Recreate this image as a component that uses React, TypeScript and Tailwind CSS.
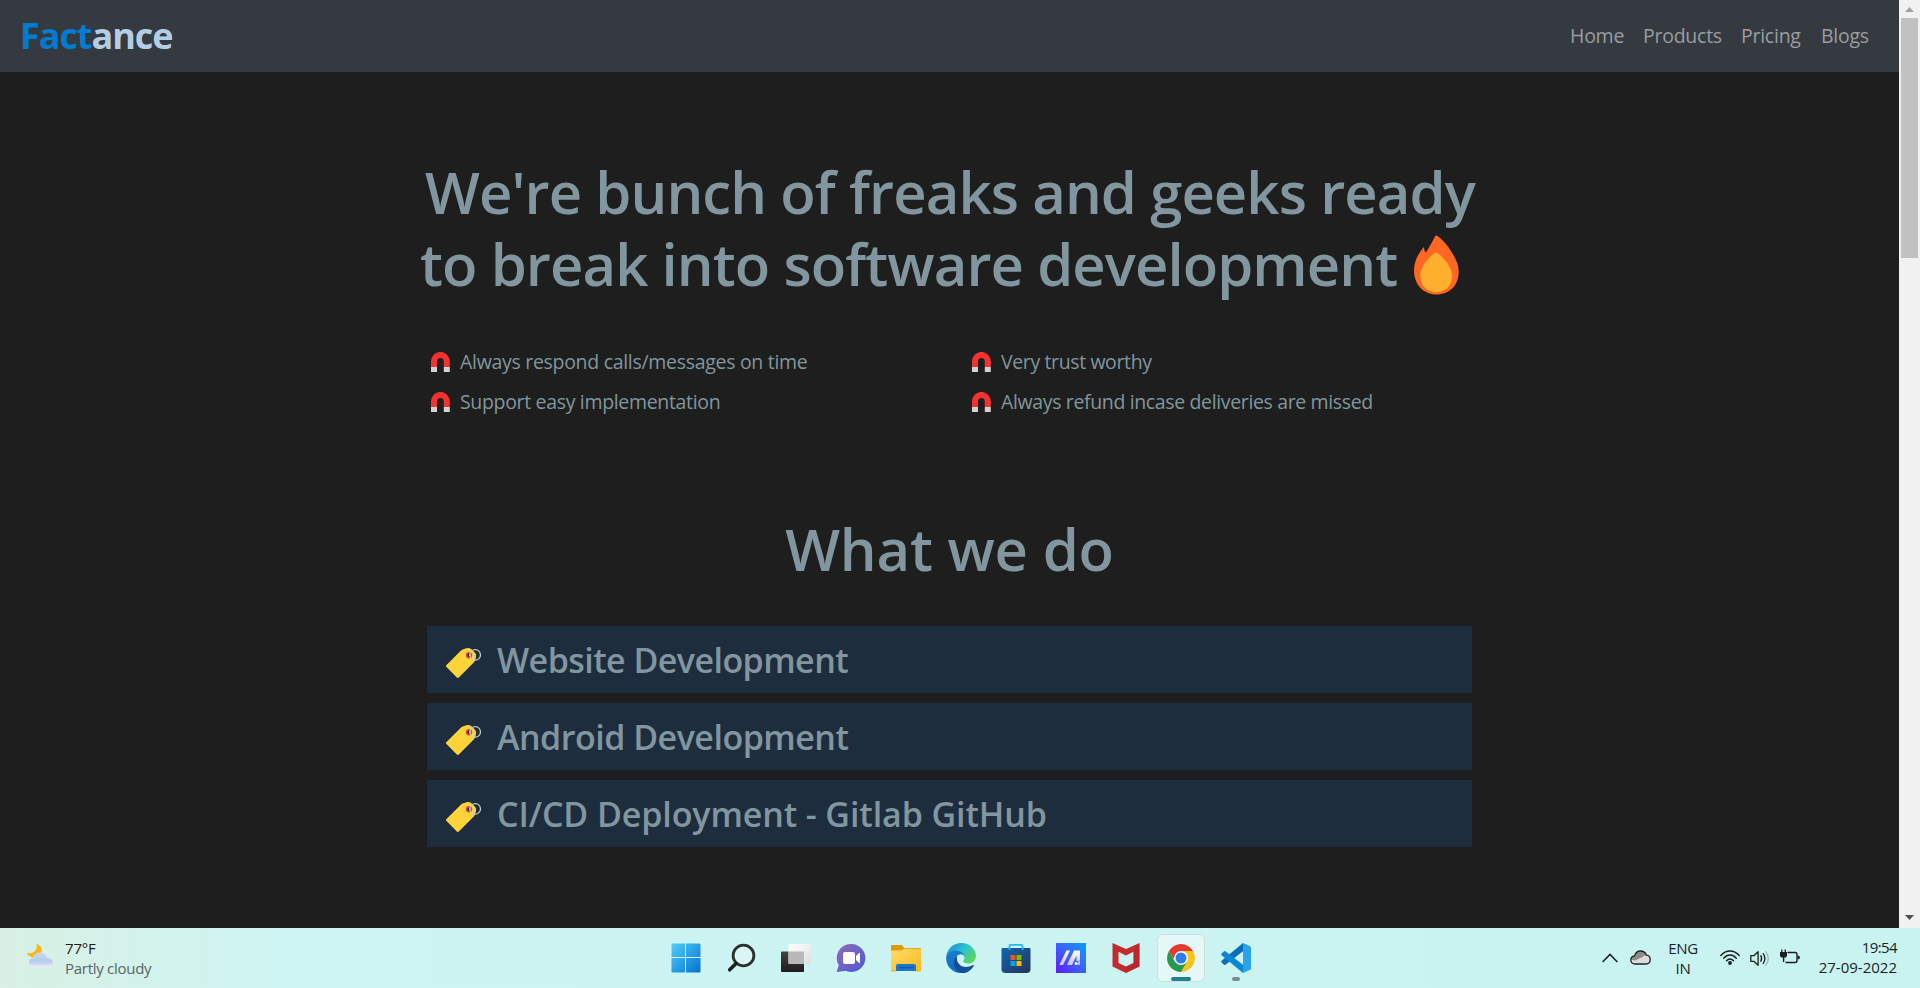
import React from 'react';

const Fire = () => (
  <svg className="ml-[17px] mt-[7px] h-[60px] w-[45px] shrink-0" viewBox="0 0 45 60">
    <path fill="#ff6723" d="M22.5.2C27 3 31 7.500 35 13c5 7.500 9.700 15 9.700 23.500C44.700 51 35 59.500 22.500 59.500S0 50 0 35.500C0 26 4.500 18.500 9.600 11.900c.8 1.800.6 4 2.400 5.700C14.500 13 18.500 7 20.500 2.500c.5-1.200 1.200-2.300 2-2.300Z" />
    <path fill="#ffb02e" d="M20 18.400c1.500-1.200 2.800-1.200 4.200 0C31 24.500 38 32 38 41.500 38 51 31 57.200 22.200 57.200S6.300 51 6.300 41C6.300 32 13 24.500 20 18.400Z" />
  </svg>
);

const Magnet = () => (
  <svg className="mr-[10px] h-5 w-[19px] shrink-0" viewBox="0 0 19 20">
    <path fill="#f8312f" d="M0 15V9.500a9.300 9.500 0 0 1 18.800 0V15h-6V9.500a3.400 3.500 0 0 0-6.800 0V15Z" />
    <path fill="#d3d3d3" d="M0 15h6v5H0zM12.800 15h6v5h-6z" />
  </svg>
);

const Tag = () => (
  <svg className="mt-[7px] h-[31px] w-9 shrink-0" viewBox="0 0 36 31">
    <path fill="#ffd43b" fillRule="evenodd" d="M.5 17 14.800 2.700C16 1.600 20 .3 22.500.1c1.200 0 2.500.7 4 2.200l2.200 2.200c1.300 1.300 1.500 2.700 1.300 4-.2 2-.8 4.200-2 5.700L13 29.300c-.8.8-1.600.8-2.400 0L.5 19c-.7-.7-.7-1.300 0-2ZM23 5a2.300 2.300 0 1 0 0 4.600A2.300 2.300 0 0 0 23 5Z" />
    <circle cx="23" cy="7.300" r="2.500" fill="none" stroke="#f0433a" strokeWidth="1.500" />
    <circle cx="29.200" cy="6.900" r="5.300" fill="none" stroke="#c4c7ca" strokeWidth="1.300" />
    <path d="M23.900 6.500v1.600" stroke="#e6e6e6" strokeWidth="1.200" />
  </svg>
);

const Slot = ({ children }: { children: React.ReactNode }) => (
  <div className="flex h-[60px] w-[55px] items-center justify-center">{children}</div>
);

const StartIcon = () => (
  <svg className="h-[30px] w-[30px]" viewBox="0 0 30 30">
    <defs>
      <linearGradient id="win" x1="0" y1="0" x2="1" y2="1" gradientUnits="objectBoundingBox">
        <stop offset="0" stopColor="#4fd0fb" />
        <stop offset="1" stopColor="#0470cf" />
      </linearGradient>
    </defs>
    <path fill="url(#win)" d="M1.500.5H14V14H.5V1.500Q.5.5 1.500.5ZM15 .5h13.500q1 0 1 1V14H15ZM.5 15H14v14.500H1.500q-1 0-1-1ZM15 15h14.500v13.500q0 1-1 1H15Z" />
  </svg>
);

const SearchGlyph = () => (
  <svg className="h-[30px] w-[30px]" viewBox="0 0 30 30">
    <circle cx="17.500" cy="12.500" r="10.400" fill="#dff5f3" fillOpacity=".7" stroke="#2f2f2f" strokeWidth="2.800" />
    <path d="m10 20.500-6.300 6.300" stroke="#1f1f1f" strokeWidth="3.600" strokeLinecap="round" />
  </svg>
);

const TaskView = () => (
  <svg className="h-[30px] w-[30px]" viewBox="0 0 30 30">
    <defs>
      <linearGradient id="tvd" x1="0" y1="0" x2="0" y2="1">
        <stop offset="0" stopColor="#424242" />
        <stop offset="1" stopColor="#1d1d1d" />
      </linearGradient>
      <linearGradient id="tvl" x1="0" y1="0" x2="1" y2="1">
        <stop offset="0" stopColor="#ffffff" />
        <stop offset="1" stopColor="#dcdedd" />
      </linearGradient>
    </defs>
    <rect x="0" y="8.500" width="23" height="20.500" rx="1" fill="url(#tvd)" />
    <rect x="7.500" y="1" width="22.500" height="20" rx="1" fill="url(#tvl)" />
    <path d="M7.500 8.500H22q1 0 1 1V21H8.500q-1 0-1-1Z" fill="#b9b9b9" />
  </svg>
);

const Chat = () => (
  <svg className="h-[30px] w-[30px]" viewBox="0 0 30 30">
    <defs>
      <linearGradient id="chat" x1="0" y1="0" x2="1" y2="1">
        <stop offset="0" stopColor="#9c67ad" />
        <stop offset=".45" stopColor="#6d64cc" />
        <stop offset="1" stopColor="#5157c4" />
      </linearGradient>
    </defs>
    <path fill="url(#chat)" d="M15.500 1a14 14 0 1 1-5.800 26.800L1.500 29c-.7 0-.9-.5-.6-1.100l1.900-5.700A14 14 0 0 1 15.500 1Z" />
    <rect x="7" y="9" width="12" height="12" rx="2" fill="#fff" />
    <path fill="#fff" d="m20 13 3-3q1-.7 1 .5v9q0 1.200-1 .5l-3-3Z" />
  </svg>
);

const Explorer = () => (
  <svg className="h-[30px] w-[30px]" viewBox="0 0 30 30">
    <defs>
      <linearGradient id="fold" x1="0" y1="0" x2="1" y2="1">
        <stop offset="0" stopColor="#ffda6b" />
        <stop offset="1" stopColor="#fdba1c" />
      </linearGradient>
    </defs>
    <path fill="#dc9a04" d="M0 3q0-1 1-1h9q1 0 1.700.8L13 5h16q1 0 1 1v6H0Z" />
    <path fill="url(#fold)" d="M0 7.500h10.500L13 5.700h16q1 0 1 1V28H1q-1 0-1-1Z" />
    <path fill="#1976cc" d="M5 28v-5q0-2 2-2h16q2 0 2 2v5Z" />
    <path fill="#0b5aa6" d="M8 24h14v1.300H8z" />
    <path fill="#f3b518" d="M0 27h5v1.500H1q-1 0-1-1.500ZM25 27h5q0 1.500-1 1.500h-4Z" />
  </svg>
);

const EdgeIcon = () => (
  <svg className="h-[30px] w-[30px]" viewBox="0 0 30 30">
    <defs>
      <linearGradient id="edgeTop" x1="0" y1="0.200" x2="1" y2="0.800">
        <stop offset="0" stopColor="#1690d8" />
        <stop offset=".5" stopColor="#2ec3cf" />
        <stop offset="1" stopColor="#61d946" />
      </linearGradient>
      <linearGradient id="edgeLeft" x1="0" y1="0" x2="0" y2="1">
        <stop offset="0" stopColor="#1a7ccb" />
        <stop offset="1" stopColor="#0f6cc6" />
      </linearGradient>
    </defs>
    <path fill="url(#edgeTop)" d="M.3 12.500C1.800 5 8 0 15.200 0 24 0 30 6.300 30 13c0 4.500-3.500 7.500-7.500 7.500-3.300 0-5.300-1.200-5.300-2.300 0-.8 1.300-1.500 1.300-3.500 0-3.500-3.500-5.700-8-5.700-4.500 0-8 1.500-10.200 3.500Z" />
    <path fill="url(#edgeLeft)" d="M.2 13.500C1.700 9.500 5.500 7.500 9.700 7.500c5 0 9.100 3 9 7-.5-2-2-3.200-4-3.200-3.500 0-5.200 3.700-5.200 7C9.500 24 13 28.500 18 29.700c-1 .3-2 .3-3 .3C6.500 30-.6 23 .2 13.500Z" />
    <path fill="#134e98" d="M11.200 13.300c-1.500 5 2.300 10.700 8.600 10.700 2.700 0 5-.7 7.200-1.900.6-.3 1.100.2.7.8C25.500 27 20.500 31 15.500 29.700 9.500 28.500 6.800 22 8.200 17.500c.6-1.900 1.600-3.300 3-4.200Z" />
  </svg>
);

const Store = () => (
  <svg className="h-[30px] w-[30px]" viewBox="0 0 30 30">
    <defs>
      <linearGradient id="store" x1="0" y1="0" x2="1" y2="1">
        <stop offset="0" stopColor="#0d66b5" />
        <stop offset="1" stopColor="#2a3356" />
      </linearGradient>
    </defs>
    <path fill="url(#store)" d="M.5 6q0-1 1-1h27q1 0 1 1v20q0 4-4 4h-21q-4 0-4-4Z" />
    <path fill="none" stroke="#24b9ee" strokeWidth="1.800" d="M8.500 7V2.800q0-1 1-1h11q1 0 1 1V7" />
    <path fill="#f25022" d="M9.500 12h5v5h-5z" />
    <path fill="#7fba00" d="M15.500 12h5v5h-5z" />
    <path fill="#00a4ef" d="M9.500 18h5v5h-5z" />
    <path fill="#ffb900" d="M15.500 18h5v5h-5z" />
  </svg>
);

const MyAsus = () => (
  <svg className="h-[30px] w-[30px]" viewBox="0 0 30 30">
    <defs>
      <linearGradient id="asus" x1="1" y1="0" x2="0" y2="1">
        <stop offset="0" stopColor="#0a9dff" />
        <stop offset=".5" stopColor="#3b62fb" />
        <stop offset="1" stopColor="#6418fb" />
      </linearGradient>
      <linearGradient id="asusw" x1="0" y1="0" x2="0" y2="1">
        <stop offset="0" stopColor="#fff" />
        <stop offset="1" stopColor="#c9c2ff" />
      </linearGradient>
    </defs>
    <path fill="url(#asus)" d="M0 0h30v30H0z" />
    <path fill="url(#asusw)" d="M10.500 7.500H14L7 22H3.300ZM18 7.500h3.200L14.500 22H11ZM20.300 7.500H24V18h-3.500v-5.500L16 22h-2.500Z" />
    <circle cx="20.200" cy="20.500" r="1.600" fill="#fff" />
    <path fill="#b9b8ff" d="M22 17h2v5h-2z" />
  </svg>
);

const Mcafee = () => (
  <svg className="h-[30px] w-[30px]" viewBox="0 0 30 30">
    <path fill="#c22c2f" fillRule="evenodd" d="M1.500 0 15 6 28.500 0v23.500L15 30 1.500 23.500ZM7.500 8.800v11.200l7.500 3.600 7.500-3.600V8.800L15 12.500Z" />
    <path fill="#a92327" d="m22.500 8.800 6-8.800v23.500L15 30v-6.400l7.500-3.600Z" fillOpacity=".35" />
  </svg>
);

const ChromeIcon = () => (
  <svg className="h-7 w-7" viewBox="0 0 28 28">
    <path fill="#e33b2e" d="M14 14 1.900 7A14 14 0 0 1 26.100 7Z" />
    <path fill="#fcc31e" d="M14 14V7h12.100A14 14 0 0 1 14 28l6-10.500Z" />
    <path fill="#249a4a" d="M14 14 20.100 17.500 14 28A14 14 0 0 1 1.900 7L8 17.500Z" />
    <path fill="#e33b2e" d="M1.900 7 14 7v7H6Z" />
    <circle cx="14" cy="14" r="6.900" fill="#fff" />
    <circle cx="14" cy="14" r="5.500" fill="#2f7cf0" />
  </svg>
);

const VsCode = () => (
  <svg className="h-[30px] w-[30px]" viewBox="0 0 30 30">
    <path fill="#0b6fb8" d="M22 0v8.200L4.500 21.800q-.8.500-1.500 0L.6 19.600q-.9-.9 0-1.800Z" />
    <path fill="#0d86d3" d="M22 30v-8.200L4.500 8.200q-.8-.5-1.500 0L.6 10.400q-.9.900 0 1.800Z" />
    <path fill="#29a3ee" d="m22 0 6.800 2.900q1.200.6 1.200 1.900v20.400q0 1.300-1.200 1.900L22 30q-1 .1-1.500-.5 1.500.7 1.500-1V1.500q0-1.700-1.500-1Q21-.1 22 0Z" />
  </svg>
);

const Weather = () => (
  <svg className="h-[26px] w-[28px]" viewBox="0 0 28 26">
    <defs>
      <linearGradient id="cloud" x1="0" y1="0" x2="0" y2="1">
        <stop offset="0" stopColor="#c9dbf3" />
        <stop offset=".55" stopColor="#b6cbed" />
        <stop offset="1" stopColor="#dfe6f4" />
      </linearGradient>
    </defs>
    <path fill="#fcb614" d="M10.500.7C15 2 16.500 6.500 15 10c-1.800 4.200-6.500 5.500-10.500 3.500C2.500 12.500 1 11.500.7 10.200 4.500 10.700 8 9.800 9.700 7c1.200-2 1.500-4 .8-6.300Z" />
    <path fill="url(#cloud)" d="M8.500 24.500c-3.500 0-5.700-2-5.700-4.900 0-2.600 1.800-4.500 4.300-4.700C8 11.500 10.500 9.500 14 9.500c3.600 0 6.400 2 7 5.500 3.500-.2 6 1.700 6 4.700 0 2.900-2.200 4.800-5.500 4.800Z" />
    <path fill="#e9eefa" fillOpacity=".6" d="M8.500 24.500c-3.500 0-5.700-1.500-5.700-3.500 4 2 20 2 24.200-1 0 2.900-2.200 4.500-5.500 4.500Z" />
  </svg>
);

const navLinks = [
  { label: 'Home', width: 'w-[73px]' },
  { label: 'Products', width: 'w-[98px]' },
  { label: 'Pricing', width: 'w-20' },
  { label: 'Blogs', width: 'w-[78px]' },
];

const perks = [
  { label: 'Always respond calls/messages on time', tracking: 'tracking-[-0.3px]' },
  { label: 'Very trust worthy', tracking: 'tracking-[-0.38px]' },
  { label: 'Support easy implementation', tracking: 'tracking-[-0.33px]' },
  { label: 'Always refund incase deliveries are missed', tracking: 'tracking-[-0.36px]' },
];

const services = [
  { label: 'Website Development', tracking: 'tracking-[-0.55px]' },
  { label: 'Android Development', tracking: 'tracking-[-0.5px]' },
  { label: 'CI/CD Deployment - Gitlab GitHub', tracking: 'tracking-[-0.1px]' },
];

function Navbar() {
  return (
    <nav className="flex h-[72px] items-center justify-between bg-[#353a41] pl-5">
      <div className="text-[36px] leading-[54px] font-bold tracking-[-1.05px]">
        <span className="text-[#007bd0]">Fact</span>
        <span className="text-[#b3cee3]">ance</span>
      </div>
      <div className="flex text-[19.5px] tracking-[-0.25px] text-[#9a9c9f]">
        {navLinks.map((l) => (
          <a key={l.label} className={l.width}>{l.label}</a>
        ))}
      </div>
    </nav>
  );
}

function Page() {
  return (
    <main className="mx-auto w-[1045px] pt-[84px] text-[#81969f]">
      <h1 className="-mx-[10px] text-[58px] leading-[72px] font-semibold tracking-[-0.92px] whitespace-nowrap">
        <div className="h-[72px] pl-[8px]">We're bunch of freaks and geeks ready</div>
        <div className="flex h-[72px] pl-[3px]">
          <span>to break into software development</span>
          <Fire />
        </div>
      </h1>
      <ul className="mt-[42px] grid grid-cols-[541px_1fr] pl-1 text-[19.5px] leading-10 whitespace-nowrap">
        {perks.map((p) => (
          <li key={p.label} className="flex h-10 items-center">
            <Magnet />
            <span className={p.tracking}>{p.label}</span>
          </li>
        ))}
      </ul>
      <h2 className="mt-[91px] text-center text-[58px] leading-[72px] font-semibold tracking-[-0.2px]">What we do</h2>
      <div className="mt-[41px] flex flex-col gap-[10px]">
        {services.map((s) => (
          <div key={s.label} className="flex h-[67px] items-center gap-[15px] bg-[#1e2d3e] pl-[19px] text-[34px] font-semibold">
            <Tag />
            <span className={`pt-[2px] ${s.tracking}`}>{s.label}</span>
          </div>
        ))}
      </div>
    </main>
  );
}

function Scrollbar() {
  return (
    <div className="flex w-[21px] flex-col items-center bg-[#f1f1f1]">
      <div className="flex h-[18px] items-center">
        <svg className="h-[5px] w-[9px]" viewBox="0 0 9 5"><path fill="#a3a3a3" d="M4.500 0 9 5H0Z" /></svg>
      </div>
      <div className="h-60 w-[17px] bg-[#c1c1c1]" />
      <div className="mt-auto flex h-[21px] items-center">
        <svg className="h-[5px] w-[9px]" viewBox="0 0 9 5"><path fill="#505050" d="M4.500 5 0 0h9Z" /></svg>
      </div>
    </div>
  );
}

function Taskbar() {
  return (
    <footer className="flex h-[60px] bg-linear-to-r from-[#d9f0e4] via-[#cdf4f3] via-15% to-[#c8f3f0] text-[15px] leading-5 text-[#1b1f1f]">
      <div className="flex w-[658px] items-center pl-[26px]">
        <div className="mb-[5px]"><Weather /></div>
        <div className="ml-[11px] whitespace-nowrap">
          <div className="tracking-[-0.2px]">77°F</div>
          <div className="tracking-[-0.28px] text-[#566664]">Partly cloudy</div>
        </div>
      </div>
      <div className="flex">
        <Slot><StartIcon /></Slot>
        <Slot><SearchGlyph /></Slot>
        <Slot><TaskView /></Slot>
        <Slot><Chat /></Slot>
        <Slot><Explorer /></Slot>
        <Slot><EdgeIcon /></Slot>
        <Slot><Store /></Slot>
        <Slot><MyAsus /></Slot>
        <Slot><Mcafee /></Slot>
        <Slot>
          <div className="flex h-12 w-12 flex-col items-center justify-between rounded-md border border-[#c4e3e3] bg-[#e5f8f7] pt-[9px]">
            <ChromeIcon />
            <div className="h-1 w-5 rounded-full bg-[#23808f]" />
          </div>
        </Slot>
        <Slot>
          <div className="flex h-12 w-12 flex-col items-center justify-between pt-[9px]">
            <VsCode />
            <div className="mb-px h-1 w-2 rounded-full bg-[#7a8d8d]" />
          </div>
        </Slot>
      </div>
      <div className="flex flex-1 items-center pl-[339px] whitespace-nowrap">
        <svg className="h-[10px] w-4" viewBox="0 0 16 10"><path fill="none" stroke="#1b1f1f" strokeWidth="1.500" d="m.6 9 7.400-7.600L15.400 9" /></svg>
        <svg className="mb-[2px] ml-3 h-[15px] w-[21px]" viewBox="0 0 21 15">
          <path fill="#dcdcdc" d="M5 14C2.500 14 .8 12.300.8 10c0-2.200 1.600-3.800 3.700-4.100C5.500 2.800 7.700 1 10.500 1c3 0 5 1.500 5.900 4.200 2.200.2 3.800 2 3.800 4.300 0 2.600-1.800 4.500-4.300 4.500Z" />
          <path fill="#8b8b8b" d="M.8 9.500C1 7.600 2.400 6.200 4.500 5.900 5.500 2.800 7.700 1 10.500 1c3 0 5 1.500 5.900 4.200-2 .1-3.200.7-4.300 2L5 10.500Z" />
          <path fill="none" stroke="#222" strokeWidth="1.300" d="M5 14C2.500 14 .8 12.300.8 10c0-2.200 1.600-3.800 3.700-4.100C5.500 2.800 7.700 1 10.500 1c3 0 5 1.500 5.900 4.200 2.200.2 3.800 2 3.800 4.300 0 2.600-1.800 4.500-4.300 4.500Z" />
        </svg>
        <div className="ml-[14px] w-[36px] text-center tracking-[-0.3px]">
          <div>ENG</div>
          <div>IN</div>
        </div>
        <svg className="mb-[2px] ml-[19px] h-[15px] w-5" viewBox="0 0 20 15">
          <g fill="none" stroke="#1b1f1f" strokeWidth="1.400" strokeLinecap="round">
            <path d="M.8 5.500C6-.6 14-.6 19.200 5.500M3.700 8.200c3.600-4.300 9-4.300 12.600 0M6.500 10.800c2-2.400 5-2.400 7 0" />
          </g>
          <circle cx="10" cy="13" r="1.900" fill="#1b1f1f" />
        </svg>
        <svg className="ml-[10px] h-[17px] w-[21px]" viewBox="0 0 21 17">
          <g fill="none" stroke="#1b1f1f" strokeWidth="1.300" strokeLinejoin="round" strokeLinecap="round">
            <path d="M.8 5.700h3l4.300-4v13.600l-4.300-4h-3ZM10.800 5.700q1.700 2.800 0 5.600M13.200 3.600q3.300 4.900 0 9.800" />
            <path stroke="#9fb5b5" d="M15.800 1.800q5 6.700 0 13.400" />
          </g>
        </svg>
        <svg className="mb-[2px] ml-[9px] h-4 w-[21px]" viewBox="0 0 21 16">
          <path fill="none" stroke="#1b1f1f" strokeWidth="1.400" d="M7.500 3.500H15q2 0 2 2v6q0 2-2 2H5.500" />
          <path fill="#1b1f1f" d="M17.500 6.500q2.500 0 2.500 2t-2.500 2ZM0 3h7v3.500q0 1.700-1.500 2H4.300v4.500H2.900V8.500H1.500Q0 8.200 0 6.500ZM1.200.5h1.300V3H1.200ZM4.600.5h1.300V3H4.600Z" />
        </svg>
        <div className="mb-[2px] ml-auto pr-[23px] text-right">
          <div className="tracking-[-0.6px]">19:54</div>
          <div>27-09-2022</div>
        </div>
      </div>
    </footer>
  );
}

export default function App() {
  return (
    <div className="flex h-[988px] w-[1920px] flex-col overflow-hidden bg-[#1e1e1e] font-['Open_Sans',sans-serif]">
      <div className="flex h-[928px]">
        <div className="w-[1899px]">
          <Navbar />
          <Page />
        </div>
        <Scrollbar />
      </div>
      <Taskbar />
    </div>
  );
}
